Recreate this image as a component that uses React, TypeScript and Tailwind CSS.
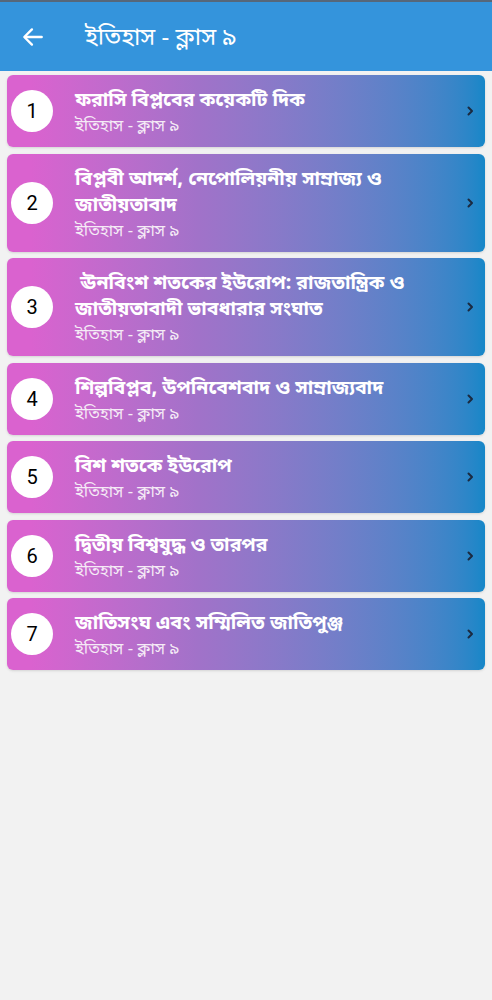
import React from "react";

const items = [
  "ফরাসি বিপ্লবের কয়েকটি দিক",
  "বিপ্লবী আদর্শ, নেপোলিয়নীয় সাম্রাজ্য ও জাতীয়তাবাদ",
  " ঊনবিংশ শতকের ইউরোপ: রাজতান্ত্রিক ও জাতীয়তাবাদী ভাবধারার সংঘাত",
  "শিল্পবিপ্লব, উপনিবেশবাদ ও সাম্রাজ্যবাদ",
  "বিশ শতকে ইউরোপ",
  "দ্বিতীয় বিশ্বযুদ্ধ ও তারপর",
  "জাতিসংঘ এবং সম্মিলিত জাতিপুঞ্জ",
];

export default function App() {
  return (
    <div
      className="min-h-[1000px] w-[492px] bg-[#f2f2f2]"
      style={{ fontFamily: '"Noto Sans Bengali", "Noto Sans", Roboto, sans-serif' }}
    >
      <div className="h-[2px] bg-[#56677a]" />
      <div className="flex h-[69px] items-center bg-[#3494dc] pl-[20px] text-white">
        <svg width="26" height="26" viewBox="0 0 24 24" fill="none" stroke="white" strokeWidth="2.2" strokeLinecap="round" strokeLinejoin="round">
          <path d="M20 12H5" />
          <path d="M11 5l-7 7 7 7" />
        </svg>
        <div className="ml-[39px] pt-[4px] text-[24px] leading-none">ইতিহাস - ক্লাস ৯</div>
      </div>
      <div className="flex flex-col gap-[6.5px] px-[7px] pt-[4px]">
        {items.map((t, i) => (
          <div
            key={i}
            className="flex min-h-[72px] items-center rounded-[6px] bg-gradient-to-r from-[#da62cf] from-5% via-[#a172c9] via-40% to-[#1587c8] pb-[7px] pl-[4px] pr-[10px] pt-[13px] shadow-sm"
          >
            <div className="-mt-[6px] flex h-[42px] w-[42px] shrink-0 items-center justify-center self-center">
              <div
                className="flex h-[42px] w-[42px] items-center justify-center rounded-full bg-white text-[20px] text-black"
                style={{ fontFamily: "Roboto, sans-serif" }}
              >
                {i + 1}
              </div>
            </div>
            <div className="ml-[22px] flex-1 pr-[30px]">
              <div className="whitespace-pre-wrap text-[19.5px] font-bold leading-[26px] text-white">{t}</div>
              <div className="text-[16.5px] leading-[26px] text-[#f5ebf6]">ইতিহাস - ক্লাস ৯</div>
            </div>
            <div className="-mt-[6px]">
              <svg width="9" height="12" viewBox="0 0 9 12" fill="none" stroke="#1b2a40" strokeWidth="2" strokeLinecap="round" strokeLinejoin="round">
                <path d="M2.5 2.5l3.5 3.5-3.5 3.5" />
              </svg>
            </div>
          </div>
        ))}
      </div>
    </div>
  );
}
